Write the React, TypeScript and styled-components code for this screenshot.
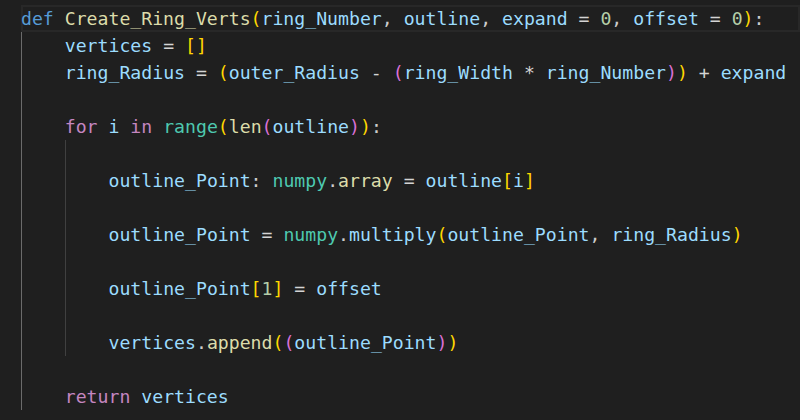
import React from "react";
import styled, { createGlobalStyle } from "styled-components";

const CW = 10.94;

const GlobalStyle = createGlobalStyle`
  html, body { margin: 0; padding: 0; background: #1f1f1f; }
  body { width: 800px; height: 420px; overflow: hidden; }
`;

const Editor = styled.div`
  display: flex;
  flex-direction: column;
  width: 800px;
  height: 420px;
  overflow: hidden;
  padding: 5px 0 0 21px;
  box-sizing: border-box;
  background: #1f1f1f;
  font-family: "DejaVu Sans Mono", "Liberation Mono", monospace;
  font-size: 18.17px;
  color: #d4d4d4;
`;

const Line = styled.div<{ $current?: boolean }>`
  display: flex;
  align-items: center;
  height: 27px;
  flex: 0 0 27px;
  white-space: pre;
  box-shadow: ${(p) => (p.$current ? "inset 0 0 0 2px #282828" : "none")};
`;

const IndentCell = styled.span<{ $active?: boolean }>`
  flex: 0 0 ${4 * CW}px;
  align-self: stretch;
  box-sizing: border-box;
  border-left: 1px solid ${(p) => (p.$active ? "#6b6b6b" : "#404040")};
`;

const COLORS: Record<string, string> = {
  kw: "#569cd6",
  ctrl: "#c586c0",
  fn: "#dcdcaa",
  cls: "#4ec9b0",
  v: "#9cdcfe",
  num: "#b5cea8",
  op: "#d4d4d4",
  p: "#cccccc",
  b1: "#ffd700",
  b2: "#da70d6",
};

const Tok = styled.span<{ $k: string }>`
  color: ${(p) => COLORS[p.$k] || "#d4d4d4"};
`;

type T = [string, string];
type L = { indent: number; guides: boolean[]; tokens: T[]; current?: boolean };

const g1 = [true];
const g12 = [true, false];

const lines: L[] = [
  {
    indent: 0,
    guides: [],
    current: true,
    tokens: [
      ["kw", "def"], ["op", " "], ["fn", "Create_Ring_Verts"], ["b1", "("],
      ["v", "ring_Number"], ["p", ", "], ["v", "outline"], ["p", ", "],
      ["v", "expand"], ["op", " = "], ["num", "0"], ["p", ", "],
      ["v", "offset"], ["op", " = "], ["num", "0"], ["b1", ")"], ["p", ":"],
    ],
  },
  { indent: 1, guides: g1, tokens: [["v", "vertices"], ["op", " = "], ["b1", "[]"]] },
  {
    indent: 1,
    guides: g1,
    tokens: [
      ["v", "ring_Radius"], ["op", " = "], ["b1", "("], ["v", "outer_Radius"],
      ["op", " - "], ["b2", "("], ["v", "ring_Width"], ["op", " * "],
      ["v", "ring_Number"], ["b2", ")"], ["b1", ")"], ["op", " + "], ["v", "expand"],
    ],
  },
  { indent: 1, guides: g1, tokens: [] },
  {
    indent: 1,
    guides: g1,
    tokens: [
      ["ctrl", "for"], ["op", " "], ["v", "i"], ["op", " "], ["ctrl", "in"], ["op", " "],
      ["cls", "range"], ["b1", "("], ["fn", "len"], ["b2", "("], ["v", "outline"],
      ["b2", ")"], ["b1", ")"], ["p", ":"],
    ],
  },
  { indent: 2, guides: g12, tokens: [] },
  {
    indent: 2,
    guides: g12,
    tokens: [
      ["v", "outline_Point"], ["p", ": "], ["cls", "numpy"], ["p", "."], ["fn", "array"],
      ["op", " = "], ["v", "outline"], ["b1", "["], ["v", "i"], ["b1", "]"],
    ],
  },
  { indent: 2, guides: g12, tokens: [] },
  {
    indent: 2,
    guides: g12,
    tokens: [
      ["v", "outline_Point"], ["op", " = "], ["cls", "numpy"], ["p", "."], ["v", "multiply"],
      ["b1", "("], ["v", "outline_Point"], ["p", ", "], ["v", "ring_Radius"], ["b1", ")"],
    ],
  },
  { indent: 2, guides: g12, tokens: [] },
  {
    indent: 2,
    guides: g12,
    tokens: [
      ["v", "outline_Point"], ["b1", "["], ["num", "1"], ["b1", "]"], ["op", " = "], ["v", "offset"],
    ],
  },
  { indent: 2, guides: g12, tokens: [] },
  {
    indent: 2,
    guides: g12,
    tokens: [
      ["v", "vertices"], ["p", "."], ["fn", "append"], ["b1", "("], ["b2", "("],
      ["v", "outline_Point"], ["b2", ")"], ["b1", ")"],
    ],
  },
  { indent: 1, guides: g1, tokens: [] },
  { indent: 1, guides: g1, tokens: [["ctrl", "return"], ["op", " "], ["v", "vertices"]] },
];

export default function App() {
  return (
    <>
      <GlobalStyle />
      <Editor>
        {lines.map((l, i) => (
          <Line key={i} $current={l.current}>
            {l.guides.map((a, j) => (
              <IndentCell key={j} $active={a} />
            ))}
            {l.tokens.map(([k, t], j) => (
              <Tok key={j} $k={k}>
                {t}
              </Tok>
            ))}
          </Line>
        ))}
      </Editor>
    </>
  );
}
